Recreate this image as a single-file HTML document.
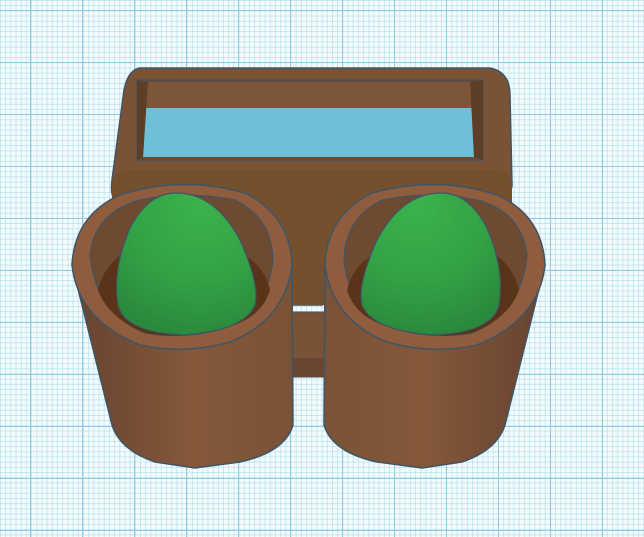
<!DOCTYPE html>
<html><head><style>
html,body{margin:0;padding:0;}
body{width:644px;height:537px;overflow:hidden;background:#f4fbfd;
background-image:
linear-gradient(#8ccde2 1px,transparent 1px),
linear-gradient(90deg,#8ccde2 1px,transparent 1px),
linear-gradient(rgba(160,215,232,.55) 1px,transparent 1px),
linear-gradient(90deg,rgba(160,215,232,.55) 1px,transparent 1px);
background-size:52px 52px,52px 52px,5.2px 5.2px,5.2px 5.2px;
background-position:0 10px,30px 0,0 0,0 0;}
svg{position:absolute;left:0;top:0}
</style></head><body>
<svg width="644" height="537" viewBox="0 0 644 537">
<defs>
<linearGradient id="body" x1="0" x2="1"><stop offset="0" stop-color="#664330"/><stop offset=".55" stop-color="#85583a"/><stop offset="1" stop-color="#7a5236"/></linearGradient>
<radialGradient id="egg" cx=".6" cy=".1" r=".9"><stop offset="0" stop-color="#3bb24c"/><stop offset=".6" stop-color="#33a045"/><stop offset="1" stop-color="#2a8a3b"/></radialGradient>
<g id="cup">
<path d="M72 265 Q75 215 120 195 Q180 175 245 193 Q290 215 292 265 L293 425 Q285 452 240 462 L195 468 L155 462 Q120 450 112 425 Z" fill="url(#body)" stroke="#3f5566" stroke-width="1.5"/>
<path d="M72 265 Q75 215 120 195 Q180 175 245 193 Q290 215 292 265 Q285 320 230 342 Q185 355 140 345 Q78 320 72 265 Z" fill="#8f5d3d" stroke="#3f5566" stroke-width="1.5"/>
<path d="M90 255 Q95 212 140 200 Q185 190 235 200 Q272 218 273 260 Q268 310 225 328 Q185 340 145 333 Q95 312 90 255 Z" fill="#6e4a31" stroke="#3f5566" stroke-width="1.2"/>
<path d="M98 290 Q110 240 185 238 Q260 245 270 290 Q262 318 225 328 Q185 340 145 333 Q108 318 98 290 Z" fill="#5a3418"/>
<path d="M176 193 Q215 193 240 240 Q260 285 255 305 Q245 330 185 335 Q125 333 118 305 Q112 270 130 228 Q148 193 176 193 Z" fill="url(#egg)" stroke="#3f5566" stroke-width="1.2"/>
</g>
</defs>
<path d="M140 68 L490 68 Q510 72 510 95 L512 185 Q512 195 495 200 L322 305 L290 305 L115 200 Q110 195 112 180 L124 90 Q128 70 140 68 Z" fill="#7a5236" stroke="#3f5566" stroke-width="1.5"/>
<rect x="112" y="170" width="400" height="135" rx="14" fill="#74502f"/>
<path d="M137 80 L483 80 L483 160 L137 160 Z" fill="#6e4a31" stroke="#3f5566" stroke-width="1.2"/>
<path d="M148 82 L470 82 L472 108 L146 108 Z" fill="#7d5538"/>
<path d="M146 108 L472 108 L474 157 L143 157 Z" fill="#6ec0d8"/>
<path d="M137 80 L148 82 L143 157 L137 160 Z M483 80 L470 82 L474 157 L483 160 Z" fill="#5d3e27"/>
<rect x="290" y="312" width="35" height="65" fill="#7a5236" stroke="#3f5566" stroke-width="1"/>
<rect x="290" y="358" width="35" height="19" fill="#6a4630"/>
<use href="#cup"/>
<use href="#cup" transform="translate(617,0) scale(-1,1)"/>
</svg>
</body></html>
